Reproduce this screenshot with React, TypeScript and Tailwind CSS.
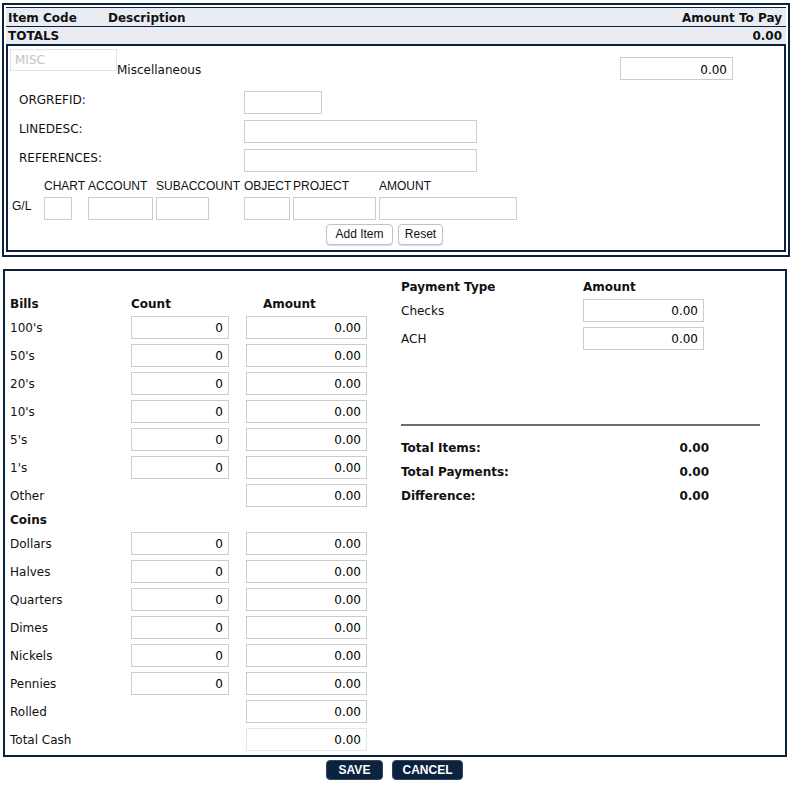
import React from 'react';

const navy = 'border-[#0c2340]';

const bills = ["100's", "50's", "20's", "10's", "5's", "1's"];
const coins = ['Dollars', 'Halves', 'Quarters', 'Dimes', 'Nickels', 'Pennies'];

const Num: React.FC<{ value: string; w: string; light?: boolean }> = ({ value, w, light }) => (
  <input
    readOnly
    value={value}
    className={`h-[23px] ${w} border ${light ? 'border-[#e6e6e6]' : 'border-[#cccccc]'} bg-white px-[5px] pt-[2px] text-right text-[12px] text-black outline-none`}
  />
);

const Box: React.FC<{ w: string }> = ({ w }) => (
  <input readOnly className={`h-[23px] ${w} border border-[#cccccc] bg-white outline-none`} />
);

const CashRow: React.FC<{ label: string; count?: boolean; light?: boolean }> = ({ label, count, light }) => (
  <div className="grid h-[28px] grid-cols-[121px_115px_121px] items-center">
    <span className="pt-[2px]">{label}</span>
    <div>{count && <Num value="0" w="w-[98px]" />}</div>
    <Num value="0.00" w="w-[121px]" light={light} />
  </div>
);

export default function App() {
  return (
    <div className="w-[792px] bg-white pb-[20px] font-['DejaVu_Sans',Verdana,sans-serif] text-[12px] leading-[15px] text-[#111]">
      {/* line item entry */}
      <div className={`ml-[2px] mt-[3px] w-[788px] border-2 ${navy} px-[2px] pt-[2px] pb-[3px]`}>
        <div className={`border-t ${navy} bg-[#e9edf3] font-bold`}>
          <div className={`flex h-[19px] items-center border-b ${navy} pl-[2px] pr-[4px] pt-[2px]`}>
            <span className="w-[100px]">Item Code</span>
            <span>Description</span>
            <span className="ml-auto">Amount To Pay</span>
          </div>
          <div className="flex h-[17px] items-center pl-[2px] pr-[4px] pt-[2px]">
            <span>TOTALS</span>
            <span className="ml-auto">0.00</span>
          </div>
        </div>

        <div className={`border-2 ${navy} pb-[5px]`}>
          <div className="flex items-start">
            <input
              disabled
              placeholder="MISC"
              className="ml-[2px] mt-[3px] h-[22px] w-[107px] border border-[#e3e3e3] bg-white px-[4px] text-[12px] placeholder:text-[#c4c4c4]"
            />
            <span className="mt-[17px]">Miscellaneous</span>
            <div className="ml-auto mr-[51px] mt-[11px]">
              <Num value="0.00" w="w-[113px]" />
            </div>
          </div>

          <div className="mt-[11px] flex flex-col gap-[6px]">
            <div className="flex items-start">
              <span className="w-[236px] pl-[11px] pt-[2px]">ORGREFID:</span>
              <Box w="w-[78px]" />
            </div>
            <div className="flex items-start">
              <span className="w-[236px] pl-[11px] pt-[2px]">LINEDESC:</span>
              <Box w="w-[233px]" />
            </div>
            <div className="flex items-start">
              <span className="w-[236px] pl-[11px] pt-[2px]">REFERENCES:</span>
              <Box w="w-[233px]" />
            </div>
          </div>

          <div className="mt-[7px] grid grid-cols-[36px_44px_68px_88px_49px_86px_138px] items-center font-['Liberation_Sans',Arial,sans-serif] text-[12px]">
            <span />
            <span>CHART</span>
            <span>ACCOUNT</span>
            <span>SUBACCOUNT</span>
            <span>OBJECT</span>
            <span>PROJECT</span>
            <span>AMOUNT</span>
            <span className="mt-[5px] self-start pl-[4px]">G/L</span>
            <div className="mt-[3px]"><Box w="w-[28px]" /></div>
            <div className="mt-[3px]"><Box w="w-[65px]" /></div>
            <div className="mt-[3px]"><Box w="w-[53px]" /></div>
            <div className="mt-[3px]"><Box w="w-[46px]" /></div>
            <div className="mt-[3px]"><Box w="w-[83px]" /></div>
            <div className="mt-[3px]"><Box w="w-[138px]" /></div>
          </div>

          <div className="ml-[318px] mt-[4px] flex gap-[5px] font-['Liberation_Sans',Arial,sans-serif] text-[12px]">
            <button className="h-[21px] w-[67px] rounded-[4px] border border-[#c2c2c2] bg-white shadow-[0_1px_1px_rgba(0,0,0,0.15)]">
              Add Item
            </button>
            <button className="h-[21px] w-[45px] rounded-[4px] border border-[#c2c2c2] bg-white shadow-[0_1px_1px_rgba(0,0,0,0.15)]">
              Reset
            </button>
          </div>
        </div>
      </div>

      {/* cash drawer */}
      <div className={`ml-[3px] mt-[12px] flex w-[784px] border-2 ${navy} pb-[2px]`}>
        <div className="w-[391px] pl-[5px] pt-[22px]">
          <div className="grid h-[20px] grid-cols-[121px_115px_121px] items-center pt-[2px] font-bold">
            <span>Bills</span>
            <span>Count</span>
            <span className="pl-[17px]">Amount</span>
          </div>
          {bills.map(b => (
            <CashRow key={b} label={b} count />
          ))}
          <CashRow label="Other" />
          <div className="flex h-[20px] items-center pt-[2px] font-bold">Coins</div>
          {coins.map(c => (
            <CashRow key={c} label={c} count />
          ))}
          <CashRow label="Rolled" />
          <CashRow label="Total Cash" light />
        </div>

        <div className="ml-[5px] pt-[5px]">
          <div className="flex h-[20px] items-center pt-[2px] font-bold">
            <span className="w-[182px]">Payment Type</span>
            <span>Amount</span>
          </div>
          {['Checks', 'ACH'].map(p => (
            <div key={p} className="flex h-[28px] items-center">
              <span className="w-[182px] pt-[2px]">{p}</span>
              <Num value="0.00" w="w-[121px]" />
            </div>
          ))}
          <div className="mt-[72px] h-[2px] w-[359px] bg-[#6e6e6e]" />
          <div className="mt-[9px] font-bold">
            {['Total Items:', 'Total Payments:', 'Difference:'].map(t => (
              <div key={t} className="flex h-[24px] items-center pt-[2px]">
                <span className="w-[182px]">{t}</span>
                <span className="w-[126px] text-right">0.00</span>
              </div>
            ))}
          </div>
        </div>
      </div>

      <div className="ml-[326px] mt-[3px] flex gap-[9px] font-['Liberation_Sans',Arial,sans-serif] text-[12px] font-bold text-white">
        <button className="h-[20px] w-[57px] rounded-[4px] border border-[#34465f] bg-[#0c2340]">SAVE</button>
        <button className="h-[20px] w-[71px] rounded-[4px] border border-[#34465f] bg-[#0c2340]">CANCEL</button>
      </div>
    </div>
  );
}
